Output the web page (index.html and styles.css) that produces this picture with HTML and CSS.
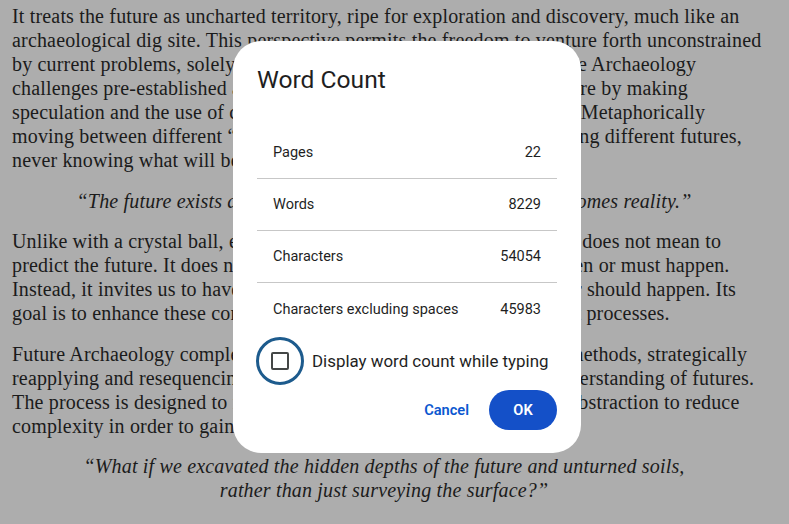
FILE: index.html
```html
<!DOCTYPE html>
<html lang="en">
<head>
<meta charset="utf-8">
<title>Word Count</title>
<link rel="stylesheet" href="styles.css">
</head>
<body>
<main class="page">
  <p class="para">It treats the future as uncharted territory, ripe for exploration and discovery, much like an<br>archaeological dig site. This perspective permits the freedom to venture forth unconstrained<br>by current problems, solely focused on what might be possible. Future Archaeology<br>challenges pre-established assumptions about the present and the future by making<br>speculation and the use of creative imagination a real legitimate tool. Metaphorically<br>moving between different “dig sites,” we explore the layers, uncovering different futures,<br>never knowing what will be found.</p>
  <p class="quote">“The future exists as a series of options until one of them becomes reality.”</p>
  <p class="para">Unlike with a crystal ball, excavating futures with this new method it does not mean to<br>predict the future. It does not claim what will happen, or what has been or must happen.<br>Instead, it invites us to have a discussion about what could happen, or should happen. Its<br>goal is to enhance these companies' innovation and strategic foresight processes.</p>
  <p class="para">Future Archaeology complements existing foresight and innovation methods, strategically<br>reapplying and resequencing them to develop a richer and deeper understanding of futures.<br>The process is designed to move between the concrete artefacts and abstraction to reduce<br>complexity in order to gain new insight and perspective.</p>
  <p class="quote">“What if we excavated the hidden depths of the future and unturned soils,<br>rather than just surveying the surface?”</p>
</main>

<section class="dialog" role="dialog" aria-labelledby="dlg-title">
  <h1 class="dialog-title" id="dlg-title">Word Count</h1>
  <div class="stats">
    <div class="stat"><span>Pages</span><span>22</span></div>
    <div class="stat"><span>Words</span><span>8229</span></div>
    <div class="stat"><span>Characters</span><span>54054</span></div>
    <div class="stat"><span>Characters excluding spaces</span><span>45983</span></div>
  </div>
  <label class="check-row">
    <span class="check-ring"><span class="check-box"></span></span>
    <span class="check-label">Display word count while typing</span>
  </label>
  <div class="actions">
    <button class="btn btn-text">Cancel</button>
    <button class="btn btn-filled">OK</button>
  </div>
</section>
</body>
</html>
```
FILE: styles.css
```css
html, body {
  margin: 0;
  padding: 0;
}
body {
  background: #adadad;
  width: 789px;
  height: 524px;
  overflow: hidden;
  position: relative;
}
.page {
  padding: 4px 20px 0 12px;
  font-family: "Liberation Serif", "Times New Roman", serif;
  font-size: 20px;
  letter-spacing: 0.17px;
  line-height: 24px;
  color: #1b1b1b;
}
.para {
  margin: 0 0 16.5px;
  white-space: nowrap;
}
.quote {
  margin: 0 0 16.5px;
  padding-right: 13px;
  font-style: italic;
  text-align: center;
  white-space: nowrap;
}

.dialog {
  position: absolute;
  left: 233px;
  top: 41px;
  width: 300px;
  padding: 23px 24px 23px 24px;
  background: #ffffff;
  border-radius: 28px;
  font-family: Roboto, "Noto Sans", Arial, sans-serif;
  color: #1f1f1f;
}
.dialog-title {
  margin: 0;
  font-size: 24.6px;
  line-height: 32px;
  font-weight: 400;
  color: #1f1f1f;
}
.stats {
  margin-top: 31px;
  display: flex;
  flex-direction: column;
}
.stat {
  display: flex;
  justify-content: space-between;
  align-items: center;
  height: 51px;
  padding: 0 16px;
  font-size: 14.5px;
  border-bottom: 1px solid #c7c7c7;
}
.stat:last-child {
  border-bottom: none;
  height: 53px;
}
.check-row {
  margin-top: 1px;
  display: flex;
  align-items: center;
  gap: 8px;
}
.check-ring {
  width: 42px;
  height: 42px;
  border: 3px solid #1d5b8d;
  border-radius: 50%;
  display: flex;
  align-items: center;
  justify-content: center;
  margin-left: -1px;
}
.check-box {
  width: 14px;
  height: 14px;
  border: 2px solid #444746;
  border-radius: 2px;
}
.check-label {
  font-size: 16.9px;
  color: #1f1f1f;
}
.actions {
  margin-top: 5px;
  display: flex;
  justify-content: flex-end;
  gap: 8px;
}
.btn {
  font-family: Roboto, "Noto Sans", Arial, sans-serif;
  font-size: 14.6px;
  font-weight: 600;
  height: 40px;
  border: none;
  border-radius: 20px;
  cursor: pointer;
}
.btn-text {
  background: transparent;
  color: #0b57d0;
  padding: 0 12px;
}
.btn-filled {
  background: #1450c8;
  color: #ffffff;
  padding: 0 24px;
  min-width: 68px;
}
```
